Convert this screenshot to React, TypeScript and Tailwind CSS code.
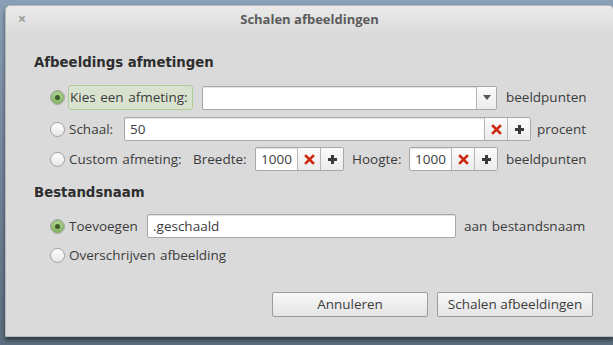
import React from "react";

function Radio({ checked }: { checked?: boolean }) {
  return (
    <span className="w-[15px] h-[15px] rounded-full border border-[#a0a0a0] bg-gradient-to-b from-[#ffffff] to-[#e8e8e8] flex items-center justify-center shrink-0">
      {checked && (
        <span className="w-[13px] h-[13px] rounded-full bg-gradient-to-b from-[#aed48f] to-[#88b867] border border-[#76a658] flex items-center justify-center">
          <span className="w-[5px] h-[5px] rounded-full bg-[#3e5a2c]" />
        </span>
      )}
    </span>
  );
}

function ClearIcon() {
  return (
    <svg width="11" height="11" viewBox="0 0 11 11">
      <path d="M2 2 L9 9 M9 2 L2 9" stroke="#cc2a10" strokeWidth="2.6" strokeLinecap="square" />
    </svg>
  );
}

function PlusIcon() {
  return (
    <svg width="11" height="11" viewBox="0 0 11 11">
      <path d="M5.5 1 V10 M1 5.5 H10" stroke="#3a3a3a" strokeWidth="3" />
    </svg>
  );
}

function SpinEntry({ value, width }: { value: string; width: string }) {
  return (
    <div className="flex h-[24px] rounded-[2px] border border-[#a8a8a8] bg-white overflow-hidden">
      <div className={`${width} flex items-center pl-[5px] shadow-[inset_0_1px_1px_#e0e0e0]`}>{value}</div>
      <div className="w-[23px] flex items-center justify-center border-l border-[#b8b8b8] bg-gradient-to-b from-[#fbfbfb] to-[#ebebeb]">
        <ClearIcon />
      </div>
      <div className="w-[23px] flex items-center justify-center border-l border-[#b8b8b8] bg-gradient-to-b from-[#fbfbfb] to-[#ebebeb]">
        <PlusIcon />
      </div>
    </div>
  );
}

const heading = "font-bold text-[#2e2e2e] text-[13.3px]";
const headingFont = { fontFamily: '"DejaVu Sans", sans-serif', wordSpacing: 0 };

export default function App() {
  return (
    <div
      className="w-[613px] h-[345px] overflow-hidden bg-gradient-to-b from-[#8aa0b6] to-[#5c6e80] pl-[5px] pt-[5px] text-[13.5px] text-[#3c3c3c] [word-spacing:1px]"
      style={{ fontFamily: '"Open Sans", "DejaVu Sans", sans-serif' }}
    >
      <div className="w-[609px] h-[332px] rounded-t-[5px] border border-[#b9b9b9] bg-[#dadada] shadow-[0_3px_4px_rgba(0,0,0,0.5)] flex flex-col">
        <div className="h-[26px] rounded-t-[5px] bg-gradient-to-b from-[#eaeaea] to-[#dcdcdc] flex items-center relative">
          <span className="absolute left-[12px] top-[6px] text-[14px] font-bold text-[#9a9a9a] leading-none">×</span>
          <span className="w-full text-center font-bold text-[13px] text-[#5c5c5c] pt-[2px] [word-spacing:0px]">Schalen afbeeldingen</span>
        </div>

        <div className="flex flex-col pl-[28px] pr-[20px]">
          <div className={`h-[20px] mt-[21px] flex items-center ${heading}`} style={headingFont}>
            Afbeeldings afmetingen
          </div>

          <div className="flex flex-col pl-[16px] mt-[12px]">
            <div className="h-[25px] flex items-center">
              <Radio checked />
              <span className="ml-[3px] w-[125px] h-[25px] pl-[1px] flex items-center rounded-[3px] border border-[#b2cc98] bg-[#d8e2cf]">Kies een afmeting:</span>
              <div className="ml-[9px] w-[295px] h-[24px] flex rounded-[2px] border border-[#a8a8a8] bg-white overflow-hidden">
                <div className="flex-1 shadow-[inset_0_1px_1px_#e0e0e0]" />
                <div className="w-[20px] flex items-center justify-center border-l border-[#b8b8b8] bg-gradient-to-b from-[#fbfbfb] to-[#ebebeb]">
                  <svg width="8" height="5" viewBox="0 0 8 5">
                    <path d="M0 0 H8 L4 5 Z" fill="#555" />
                  </svg>
                </div>
              </div>
              <span className="ml-[9px]">beeldpunten</span>
            </div>

            <div className="h-[24px] mt-[7px] flex items-center">
              <Radio />
              <span className="ml-[4px] w-[55px]">Schaal:</span>
              <SpinEntry value="50" width="w-[359px]" />
              <span className="ml-[6px]">procent</span>
            </div>

            <div className="h-[24px] mt-[6px] flex items-center">
              <Radio />
              <span className="ml-[4px] w-[124px]">Custom afmeting:</span>
              <span className="w-[62px]">Breedte:</span>
              <SpinEntry value="1000" width="w-[41px]" />
              <span className="ml-[8px] w-[57px]">Hoogte:</span>
              <SpinEntry value="1000" width="w-[41px]" />
              <span className="ml-[8px]">beeldpunten</span>
            </div>
          </div>

          <div className={`h-[20px] mt-[12px] flex items-center ${heading}`} style={headingFont}>
            Bestandsnaam
          </div>

          <div className="flex flex-col pl-[16px] mt-[11px]">
            <div className="h-[24px] flex items-center">
              <Radio checked />
              <span className="ml-[4px] w-[78px]">Toevoegen</span>
              <div className="w-[309px] h-[24px] flex items-center pl-[5px] rounded-[2px] border border-[#a8a8a8] bg-white shadow-[inset_0_1px_1px_#e0e0e0]">
                .geschaald
              </div>
              <span className="ml-[8px]">aan bestandsnaam</span>
            </div>
            <div className="h-[24px] mt-[5px] flex items-center">
              <Radio />
              <span className="ml-[4px]">Overschrijven afbeelding</span>
            </div>
          </div>

          <div className="flex justify-end gap-[9px] mt-[25px]">
            <button className="w-[156px] h-[25px] rounded-[2px] border border-[#9c9c9c] bg-gradient-to-b from-[#f8f8f8] to-[#e4e4e4] text-[#3c3c3c]">
              Annuleren
            </button>
            <button className="w-[156px] h-[25px] rounded-[2px] border border-[#9c9c9c] bg-gradient-to-b from-[#f8f8f8] to-[#e4e4e4] text-[#3c3c3c] [word-spacing:0px]">
              Schalen afbeeldingen
            </button>
          </div>
        </div>
      </div>
    </div>
  );
}
